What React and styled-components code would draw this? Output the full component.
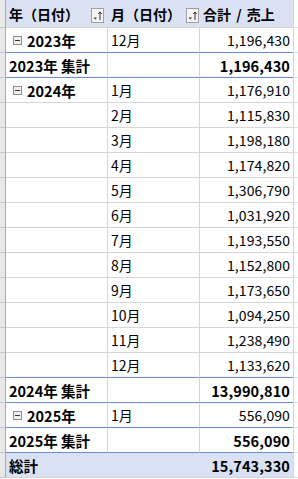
import styled, { createGlobalStyle } from 'styled-components'

const GlobalStyle = createGlobalStyle`
  html, body {
    margin: 0;
    padding: 0;
    background: #ffffff;
  }
  body {
    font-family: "Noto Sans CJK JP", "Noto Sans", sans-serif;
    font-size: 14px;
    color: #000;
  }
`;

const BLUE = '#6a8fd6';
const GRID = '#d6d6d6';

const Sheet = styled.div`
  width: 298px;
  display: flex;
  flex-direction: column;
`;

const Row = styled.div`
  display: grid;
  grid-template-columns: 6px 102px 92px 93px 1fr;
  height: ${p => (p.$head ? '28px' : '25px')};
`;

const Gutter = styled.div`
  background: #e8e8e8;
  border-right: 1px solid #a9a9a9;
  border-bottom: 1px solid #c6c6c6;
`;

const Edge = styled.div`
  background: #fff;
  border-left: 1px solid ${GRID};
  border-bottom: 1px solid #e1e1e1;
`;

const Cell = styled.div`
  display: flex;
  align-items: center;
  gap: 5px;
  padding: ${p => (p.$indent ? '0 0 0 7px' : '0 3px')};
  justify-content: ${p => (p.$num ? 'flex-end' : 'flex-start')};
  font-weight: ${p => (p.$bold ? 700 : 400)};
  font-size: ${p => (p.$bold ? '14.5px' : '14px')};
  white-space: nowrap;
  background: ${p => (p.$fill ? '#d9e1f2' : '#fff')};
  border-bottom: 1px solid ${p => p.$line || GRID};
  border-right: ${p => (p.$divider ? `1px solid ${GRID}` : 'none')};
  letter-spacing: ${p => (p.$num ? '0.1px' : '0')};
`;

const HeadCell = styled(Cell)`
  justify-content: space-between;
  padding: 0 4px 0 3px;
  font-size: 14px;
  word-spacing: 2px;
`;

const FilterBox = styled.span`
  width: 13px;
  height: 15px;
  box-sizing: border-box;
  border: 1px solid #a0a0a0;
  background: #f4f4f4;
  display: flex;
  align-items: center;
  justify-content: center;
  margin-top: 3px;
`;

const Toggle = styled.span`
  width: 9px;
  height: 9px;
  box-sizing: border-box;
  border: 1px solid #8d8d8d;
  background: #f0f0f0;
  display: flex;
  align-items: center;
  justify-content: center;
  &::after {
    content: '';
    width: 5px;
    height: 1px;
    background: #333;
  }
`;

const SortIcon = () => (
  <svg width="11" height="13" viewBox="0 0 11 13">
    <path d="M1.5 8.5 L5 8.5 L3.25 10.5 Z" fill="#333" />
    <path d="M8 3 L8 11" stroke="#333" strokeWidth="1" />
    <path d="M6.3 5 L8 3 L9.7 5" stroke="#333" strokeWidth="1" fill="none" />
  </svg>
);

const Filter = () => (
  <FilterBox>
    <SortIcon />
  </FilterBox>
);

const data = [
  { year: '2023年', months: [['12月', '1,196,430']], total: '1,196,430' },
  {
    year: '2024年',
    months: [
      ['1月', '1,176,910'],
      ['2月', '1,115,830'],
      ['3月', '1,198,180'],
      ['4月', '1,174,820'],
      ['5月', '1,306,790'],
      ['6月', '1,031,920'],
      ['7月', '1,193,550'],
      ['8月', '1,152,800'],
      ['9月', '1,173,650'],
      ['10月', '1,094,250'],
      ['11月', '1,238,490'],
      ['12月', '1,133,620'],
    ],
    total: '13,990,810',
  },
  { year: '2025年', months: [['1月', '556,090']], total: '556,090' },
];

const App = () => {
  return (
    <>
      <GlobalStyle />
      <Sheet>
        <Row $head>
          <Gutter />
          <HeadCell $bold $fill>
            年（日付）
            <Filter />
          </HeadCell>
          <HeadCell $bold $fill>
            月（日付）
            <Filter />
          </HeadCell>
          <HeadCell $bold $fill>
            合計 / 売上
          </HeadCell>
          <Edge />
        </Row>
        {data.map(group => (
          <div key={group.year}>
            {group.months.map(([month, value], i) => {
              const last = i === group.months.length - 1;
              const line = last ? BLUE : GRID;
              return (
                <Row key={month}>
                  <Gutter />
                  {i === 0 ? (
                    <Cell $bold $indent $divider $line={line}>
                      <Toggle />
                      {group.year}
                    </Cell>
                  ) : (
                    <Cell $divider $line={line} />
                  )}
                  <Cell $divider $line={line}>{month}</Cell>
                  <Cell $num $line={line}>{value}</Cell>
                  <Edge />
                </Row>
              );
            })}
            <Row>
              <Gutter />
              <Cell $bold $divider $line={BLUE}>{group.year} 集計</Cell>
              <Cell $divider $line={BLUE} />
              <Cell $bold $num $line={BLUE}>{group.total}</Cell>
              <Edge />
            </Row>
          </div>
        ))}
        <Row>
          <Gutter />
          <Cell $bold $fill>総計</Cell>
          <Cell $fill />
          <Cell $bold $num $fill>15,743,330</Cell>
          <Edge />
        </Row>
      </Sheet>
    </>
  );
};

export default App;
